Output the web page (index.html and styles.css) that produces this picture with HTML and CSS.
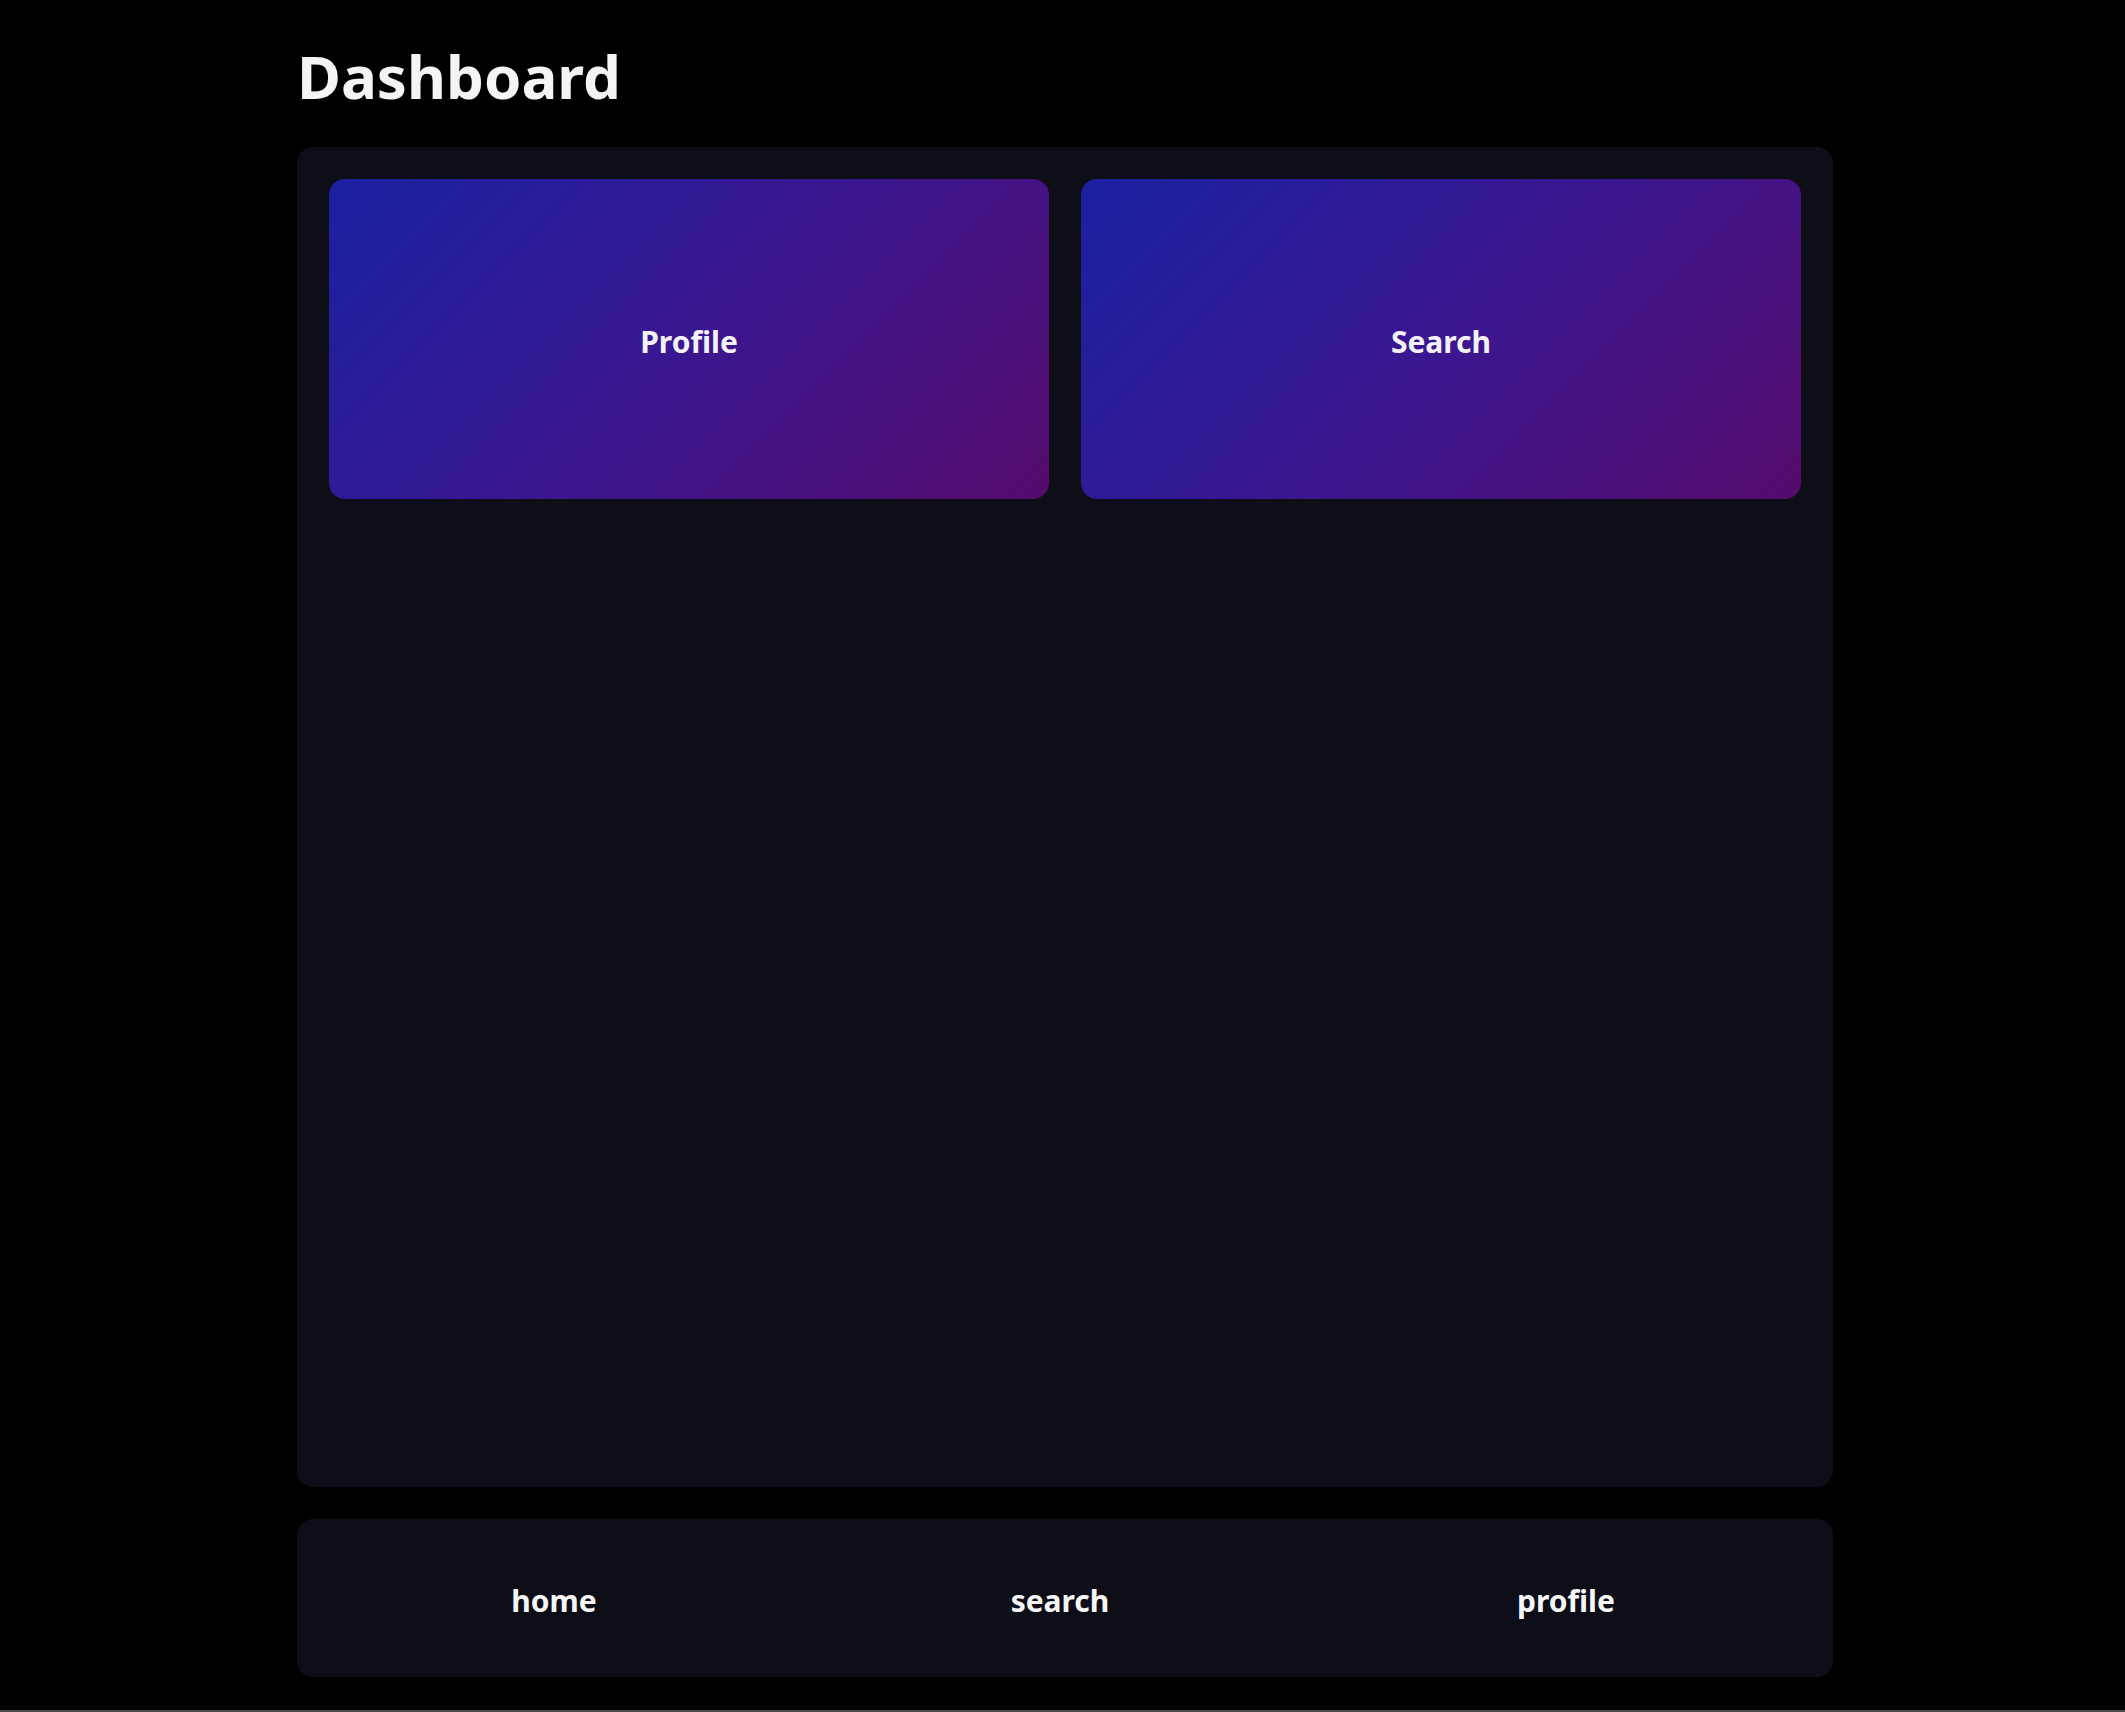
FILE: index.html
```html
<!DOCTYPE html>
<html lang="en">
<head>
<meta charset="utf-8">
<title>Dashboard</title>
<link rel="stylesheet" href="styles.css">
</head>
<body>
<div class="page">
  <h1 class="title">Dashboard</h1>
  <main class="panel">
    <div class="cards">
      <div class="card">Profile</div>
      <div class="card">Search</div>
    </div>
  </main>
  <nav class="nav">
    <div class="nav-item">home</div>
    <div class="nav-item">search</div>
    <div class="nav-item">profile</div>
  </nav>
</div>
<div class="edge"></div>
</body>
</html>
```
FILE: styles.css
```css
html, body {
  margin: 0;
  padding: 0;
  background: #000;
}
body {
  font-family: "Noto Sans", "Open Sans", sans-serif;
  color: #f3f3f5;
  height: 1712px;
  overflow: hidden;
}
.page {
  width: 1536px;
  margin-left: 297px;
  padding-top: 46px;
  display: flex;
  flex-direction: column;
}
.title {
  margin: 0 0 41px 0;
  font-size: 60px;
  line-height: 60px;
  font-weight: 700;
  color: #f4f4f4;
}
.panel {
  background: #0d0e17;
  border-radius: 16px;
  height: 1340px;
  box-sizing: border-box;
  padding: 32px;
}
.cards {
  display: grid;
  grid-template-columns: 1fr 1fr;
  gap: 32px;
}
.card {
  height: 320px;
  box-sizing: border-box;
  padding-top: 5px;
  border-radius: 16px;
  background: linear-gradient(135deg, #1a21a1 0%, #3a1790 50%, #540b6c 100%);
  display: flex;
  align-items: center;
  justify-content: center;
  font-size: 30px;
  font-weight: 700;
  color: #f4f2f8;
}
.nav {
  margin-top: 32px;
  height: 158px;
  box-sizing: border-box;
  background: #0d0e17;
  border-radius: 16px;
  display: grid;
  grid-template-columns: repeat(3, 1fr);
  align-items: center;
  padding: 4px 14px 0 4px;
}
.nav-item {
  text-align: center;
  font-size: 30px;
  font-weight: 700;
  color: #f6f6f8;
}
.edge {
  position: fixed;
  left: 0;
  right: 0;
  bottom: 0;
  height: 2px;
  background: #4b4b4b;
}
```
